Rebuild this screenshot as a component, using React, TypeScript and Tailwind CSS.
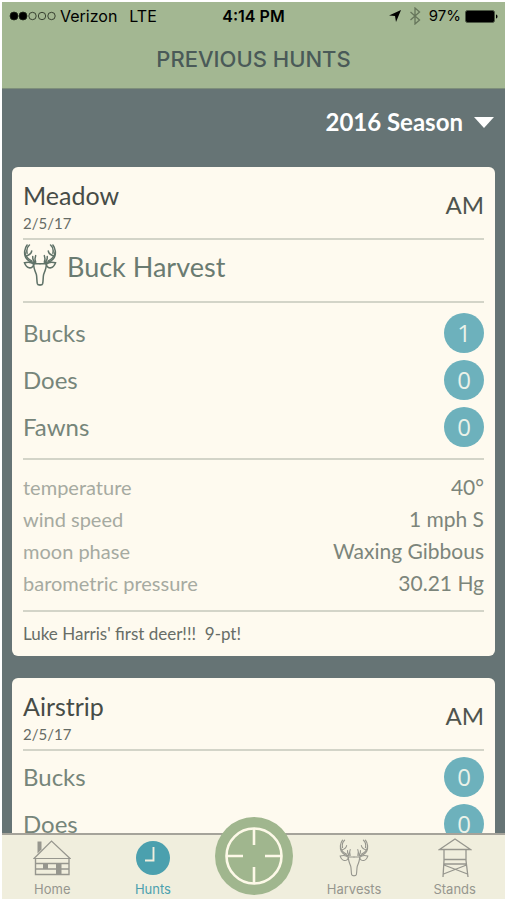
import React from 'react';

interface Hunt {
  stand: string;
  date: string;
  period: string;
  harvest?: string;
  counts: { label: string; value: number }[];
  conditions?: { label: string; value: string }[];
  note?: string;
}

const hunts: Hunt[] = [
  {
    stand: 'Meadow',
    date: '2/5/17',
    period: 'AM',
    harvest: 'Buck Harvest',
    counts: [
      { label: 'Bucks', value: 1 },
      { label: 'Does', value: 0 },
      { label: 'Fawns', value: 0 },
    ],
    conditions: [
      { label: 'temperature', value: '40°' },
      { label: 'wind speed', value: '1 mph S' },
      { label: 'moon phase', value: 'Waxing Gibbous' },
      { label: 'barometric pressure', value: '30.21 Hg' },
    ],
    note: "Luke Harris' first deer!!!  9-pt!",
  },
  {
    stand: 'Airstrip',
    date: '2/5/17',
    period: 'AM',
    counts: [
      { label: 'Bucks', value: 0 },
      { label: 'Does', value: 0 },
    ],
  },
];

const antlerHalf = (
  <>
    <path d="M12 3C4 13 2 30 8 41c6 10 15 14 27 15" />
    <path d="M19 3c-7 6-9 16-7 25" />
    <path d="M26 21c-1 8-6 12-16 15" />
    <path d="M5 24c1 11 8 21 21 27" />
    <path d="M38 35c-3 7-3 12 0 20M29 38c-1 5 1 10 4 15" />
    <path d="M4 57c10-3 21-2 28 4-1 8-7 12-14 11C11 71 7 65 4 57z" />
    <path d="M51 60H32c-1 11 4 22 8 32 2 9 1 20 3 28 1 3 3 4 8 4" />
  </>
);

const DeerIcon: React.FC<{ className: string; strokeWidth: number }> = ({ className, strokeWidth }) => (
  <svg viewBox="0 0 102 127" className={className} fill="none" stroke="currentColor" strokeWidth={strokeWidth} strokeLinecap="round" aria-hidden="true">
    <g>{antlerHalf}</g>
    <g transform="matrix(-1 0 0 1 102 0)">{antlerHalf}</g>
  </svg>
);

const CabinIcon = () => (
  <svg viewBox="0 0 38 36" className="h-9 w-[38px]" fill="none" stroke="currentColor" strokeWidth="1.200" aria-hidden="true">
    <path d="M4.500 1.500h4v8l-4 4z" fill="currentColor" stroke="none" />
    <path d="M1 18.500 18.500 1 37 18.500z" />
    <path d="M2.500 18.500v16H36v-16M2.500 23.500H36M2.500 29H36" strokeWidth="1.400" />
    <path d="M10 24h5v5h-5zM23 24h5.500v10.500H23z" fill="currentColor" stroke="none" />
  </svg>
);

const ClockIcon = () => (
  <svg viewBox="0 0 36 36" className="size-9" aria-hidden="true">
    <circle cx="18" cy="18" r="17" fill="#4ba0ae" />
    <path d="M18.500 7v13.500H10" fill="none" stroke="#f0eedd" strokeWidth="1.900" />
  </svg>
);

const TowerIcon = () => (
  <svg viewBox="0 0 34 40" className="h-10 w-[34px]" fill="none" stroke="currentColor" strokeWidth="1.300" aria-hidden="true">
    <path d="M1.500 11.500 17 1l15.500 10.500zM6 11.500v11L5 39M28 11.500v11L30 39M6 21.500h22M6 26h22.500M5.500 36 28.500 27M29.500 36 6 27" />
  </svg>
);

const CrosshairIcon = () => (
  <svg viewBox="0 0 78 78" className="size-[78px]" aria-hidden="true">
    <circle cx="39" cy="39" r="39" fill="#a0b68e" />
    <g fill="none" stroke="#fdf9e8" strokeWidth="2.600">
      <circle cx="39" cy="39" r="27.500" />
      <path d="M39 11.500V28M39 50v16.500M11.500 39H28M50 39h16.500" />
    </g>
  </svg>
);

const StatusBar = () => (
  <div className="grid grid-cols-[1fr_auto_1fr] items-center px-[7px] pt-1 text-base leading-5 text-black">
    <div className="flex items-center">
      <svg viewBox="0 0 47 10" className="h-[10px] w-[47px]" fill="none" stroke="#1d2418" strokeWidth="0.800" aria-hidden="true">
        <circle cx="5" cy="5" r="4" fill="#000" />
        <circle cx="14" cy="5" r="4" fill="#000" />
        <circle cx="23.500" cy="5" r="3.700" />
        <circle cx="33" cy="5" r="3.700" />
        <circle cx="42.500" cy="5" r="3.700" />
      </svg>
      <span className="ml-1">Verizon</span>
      <span className="ml-3">LTE</span>
    </div>
    <span className="font-semibold">4:14 PM</span>
    <div className="flex items-center justify-end">
      <svg viewBox="0 0 12 12" className="size-3" aria-hidden="true">
        <path d="M12 0 7 12 6 6 0 5.500z" fill="#000" />
      </svg>
      <svg viewBox="0 0 12 18" className="ml-2 h-[18px] w-3" fill="none" stroke="#66755b" strokeWidth="1.300" aria-hidden="true">
        <path d="m1.500 5 9 8-4.500 4V1l4.500 4-9 8" />
      </svg>
      <span className="ml-2 text-[15px]">97%</span>
      <svg viewBox="0 0 33 13" className="ml-1 h-[13px] w-[33px]" aria-hidden="true">
        <rect x="0.500" y="0.500" width="29" height="12" rx="2" fill="#000" stroke="#4c5744" />
        <path d="M31 4.500c2 .5 2 3.500 0 4z" fill="#000" />
      </svg>
    </div>
  </div>
);

const HuntCard: React.FC<{ hunt: Hunt }> = ({ hunt }) => (
  <article className="rounded-md bg-[#fefaef] px-[11px]">
    <div className="flex h-[73px] items-center justify-between border-b-2 border-[#d3d4c8] pt-1">
      <div className="pt-1">
        <h2 className="text-[25px] leading-8 text-[#474c47]">{hunt.stand}</h2>
        <p className="text-[15px] leading-6 text-[#666b65]">{hunt.date}</p>
      </div>
      <span className="text-2xl text-[#4f544e]">{hunt.period}</span>
    </div>
    {hunt.harvest && (
      <div className="mb-1 flex h-[63px] items-start gap-[10px] border-b-2 border-[#d3d4c8] pt-1 text-[#6a7b71]">
        <DeerIcon className="h-[42px] w-[34px] text-[#5f7268]" strokeWidth={4.6} />
        <span className="text-[27px] leading-[46px]">{hunt.harvest}</span>
      </div>
    )}
    <ul className="flex flex-col gap-[7px] pt-[6px] pb-[11px]">
      {hunt.counts.map((count) => (
        <li key={count.label} className="flex items-center justify-between text-2xl text-[#76857a]">
          <span>{count.label}</span>
          <span className="flex size-10 items-center justify-center rounded-full bg-[#6db1bc] font-['Open_Sans'] text-[#eaf2e9]">
            {count.value}
          </span>
        </li>
      ))}
    </ul>
    {hunt.conditions && (
      <dl className="border-y-2 border-[#d3d4c8] py-[11px] text-xl leading-8">
        {hunt.conditions.map((item) => (
          <div key={item.label} className="flex justify-between">
            <dt className="text-[#a6aaa1]">{item.label}</dt>
            <dd className="text-[21px] text-[#7c857b]">{item.value}</dd>
          </div>
        ))}
      </dl>
    )}
    {hunt.note && <p className="py-[10px] text-[17px] leading-6 whitespace-pre-wrap text-[#676d67]">{hunt.note}</p>}
  </article>
);

const TabLink: React.FC<{ label: string; active?: boolean; children: React.ReactNode }> = ({ label, active, children }) => (
  <a href="#" className={`flex flex-1 flex-col items-center ${active ? 'text-[#4ba0ae]' : 'text-[#96968e]'}`}>
    <span className="flex h-[46px] items-center">{children}</span>
    <span className="text-[13px] leading-4">{label}</span>
  </a>
);

export default function App() {
  return (
    <div className="flex h-screen flex-col overflow-hidden bg-white pt-[2px] pr-[2px] pb-px pl-[2px] font-['Inter',sans-serif]">
      <header className="h-[87px] shrink-0 border-b border-[#7e8f7b] bg-[#a3b792]">
        <StatusBar />
        <h1 className="mt-[17px] text-center text-[22px] leading-8 font-medium text-[#4a5a58]">PREVIOUS HUNTS</h1>
      </header>

      <main className="min-h-0 flex-1 overflow-hidden bg-[#667475] px-[10px] font-['Lato',sans-serif]">
        <div className="flex h-[78px] items-center justify-end pb-3">
          <label className="flex items-center gap-[10px] text-2xl font-bold text-white">
            <select aria-label="Season" className="appearance-none bg-transparent [field-sizing:content]">
              <option>2016 Season</option>
            </select>
            <svg viewBox="0 0 22 11" className="h-[11px] w-[22px]" fill="currentColor" aria-hidden="true">
              <path d="M1 0h20L11 11z" />
            </svg>
          </label>
        </div>
        <div className="flex flex-col gap-[22px]">
          {hunts.map((hunt) => (
            <HuntCard key={hunt.stand} hunt={hunt} />
          ))}
        </div>
      </main>

      <nav className="relative flex h-[66px] shrink-0 border-t-2 border-[#a5a39a] bg-[#f0eedd]">
        <TabLink label="Home"><CabinIcon /></TabLink>
        <TabLink label="Hunts" active><ClockIcon /></TabLink>
        <div className="flex-1" />
        <TabLink label="Harvests"><DeerIcon className="h-[38px] w-[30px]" strokeWidth={3.8} /></TabLink>
        <TabLink label="Stands"><TowerIcon /></TabLink>
        <button type="button" aria-label="New hunt" className="absolute bottom-1 left-1/2 -translate-x-1/2 rounded-full">
          <CrosshairIcon />
        </button>
      </nav>
    </div>
  );
}
